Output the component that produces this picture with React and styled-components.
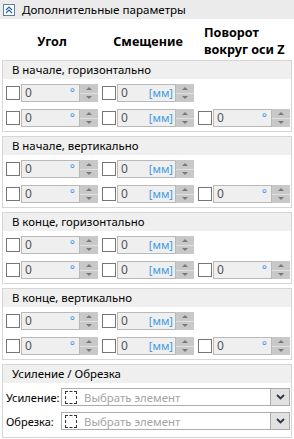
import React from 'react'
import styled, { createGlobalStyle } from 'styled-components'

const GlobalStyle = createGlobalStyle`
  html, body { margin: 0; padding: 0; background: #fff; }
  body {
    font-family: "Noto Sans", "Liberation Sans", sans-serif;
    font-size: 11.4px;
    color: #000;
  }
`

const groups = [
  'В начале, горизонтально',
  'В начале, вертикально',
  'В конце, горизонтально',
  'В конце, вертикально',
]

// one checkbox + spin field + spinner
function SpinCell({ unit }) {
  return (
    <Cell>
      <Check />
      <Field>
        <Value>0</Value>
        {unit === 'mm' ? <Unit>[мм]</Unit> : <Degree>°</Degree>}
      </Field>
      <Spinner>
        <SpinHalf><ArrowUp /></SpinHalf>
        <SpinHalf><ArrowDown /></SpinHalf>
      </Spinner>
    </Cell>
  )
}

function Chevron() {
  return (
    <svg width="9" height="6" viewBox="0 0 9 6">
      <polyline points="1,1 4.5,4.5 8,1" fill="none" stroke="#2a3646" strokeWidth="1.8" />
    </svg>
  )
}

function PickSelect() {
  return (
    <Select>
      <DashedIcon />
      <Placeholder>Выбрать элемент</Placeholder>
      <DropButton><Chevron /></DropButton>
    </Select>
  )
}

export default function App() {
  return (
    <Page>
      <GlobalStyle />
      <Header>
        <CollapseBox>
          <svg width="8" height="8" viewBox="0 0 8 8">
            <polyline points="1,4 4,1 7,4" fill="none" stroke="#2f62a8" strokeWidth="1.2" />
            <polyline points="1,7 4,4 7,7" fill="none" stroke="#2f62a8" strokeWidth="1.2" />
          </svg>
        </CollapseBox>
        <span>Дополнительные параметры</span>
      </Header>

      <ColumnHeads>
        <ColumnHead>Угол</ColumnHead>
        <ColumnHead>Смещение</ColumnHead>
        <ColumnHead $left>
          <HeadLine>Поворот</HeadLine>
          <HeadLine>вокруг оси Z</HeadLine>
        </ColumnHead>
      </ColumnHeads>

      {groups.map((g) => (
        <Group key={g}>
          <GroupTitle>{g}</GroupTitle>
          <GroupBody>
            <Row>
              <SpinCell unit="deg" />
              <SpinCell unit="mm" />
            </Row>
            <Row>
              <SpinCell unit="deg" />
              <SpinCell unit="mm" />
              <SpinCell unit="deg" />
            </Row>
          </GroupBody>
        </Group>
      ))}

      <Group>
        <GroupTitle>Усиление / Обрезка</GroupTitle>
        <SelectBody>
          <SelectRow>
            <SelectLabel>Усиление:</SelectLabel>
            <PickSelect />
          </SelectRow>
          <SelectRow>
            <SelectLabel>Обрезка:</SelectLabel>
            <PickSelect />
          </SelectRow>
        </SelectBody>
      </Group>
    </Page>
  )
}

const Page = styled.div`
  width: 294px;
  height: 439px;
  overflow: hidden;
  background: #fff;
`
const Header = styled.div`
  height: 19px;
  background: #ebebeb;
  display: flex;
  align-items: center;
  padding-left: 3px;
  font-size: 11.6px;
`
const CollapseBox = styled.div`
  width: 10px;
  height: 10px;
  border: 1px solid #5d7ea6;
  background: #fff;
  display: flex;
  align-items: center;
  justify-content: center;
  margin-right: 7px;
`
const ColumnHeads = styled.div`
  display: grid;
  grid-template-columns: repeat(3, 92px);
  column-gap: 4px;
  padding: 3px 0 0 6px;
  height: 41px;
  box-sizing: border-box;
  align-items: center;
`
const ColumnHead = styled.div`
  font-weight: 700;
  font-size: 12.6px;
  line-height: 17px;
  text-align: ${(p) => (p.$left ? 'left' : 'center')};
  padding-left: ${(p) => (p.$left ? '6px' : '0')};
  white-space: nowrap;
`
const HeadLine = styled.div`
  height: 17px;
`
const Group = styled.div`
  margin: 0 2px 4px 2px;
  border: 1px solid #d6d6d6;
`
const GroupTitle = styled.div`
  height: 18px;
  line-height: 18px;
  background: #efefef;
  padding-left: 9px;
`
const GroupBody = styled.div`
  padding: 5px 3px 4px 3px;
  display: flex;
  flex-direction: column;
  gap: 7px;
`
const Row = styled.div`
  display: grid;
  grid-template-columns: repeat(3, 92px);
  column-gap: 4px;
`
const Cell = styled.div`
  display: flex;
  align-items: center;
`
const Check = styled.span`
  width: 12px;
  height: 12px;
  border: 1px solid #767676;
  background: #fff;
  margin-right: 1px;
  flex: none;
`
const Field = styled.div`
  width: 59px;
  height: 18px;
  box-sizing: border-box;
  border: 1px solid #b9b9b9;
  background: #efefef;
  display: flex;
  align-items: center;
  justify-content: space-between;
  padding: 0 2px 0 3px;
`
const Value = styled.span`
  color: #555;
  font-size: 12px;
  line-height: 16px;
`
const Unit = styled.span`
  color: #3f9be4;
  font-size: 11px;
  line-height: 16px;
`
const Degree = styled.span`
  color: #3f9be4;
  font-size: 12px;
  line-height: 16px;
  margin-right: 2px;
`
const Spinner = styled.div`
  width: 18px;
  height: 18px;
  display: flex;
  flex-direction: column;
  background: #c8c8c8;
`
const SpinHalf = styled.div`
  flex: 1;
  display: flex;
  align-items: center;
  justify-content: center;
  & + & {
    border-top: 1px solid #e0e0e0;
  }
`
const ArrowUp = styled.span`
  width: 0;
  height: 0;
  border-left: 3px solid transparent;
  border-right: 3px solid transparent;
  border-bottom: 3px solid #7a7a7a;
`
const ArrowDown = styled.span`
  width: 0;
  height: 0;
  border-left: 3px solid transparent;
  border-right: 3px solid transparent;
  border-top: 3px solid #7a7a7a;
`
const SelectBody = styled.div`
  padding: 5px 1px 7px 3px;
  display: flex;
  flex-direction: column;
  gap: 6px;
`
const SelectRow = styled.div`
  display: flex;
  align-items: center;
`
const SelectLabel = styled.span`
  width: 55px;
  flex: none;
  white-space: nowrap;
  font-size: 11px;
`
const Select = styled.div`
  flex: 1;
  height: 18px;
  box-sizing: border-box;
  border: 1px solid #acacac;
  background: #fff;
  display: flex;
  align-items: center;
`
const DashedIcon = styled.span`
  width: 10px;
  height: 11px;
  border: 1px dashed #333;
  margin-left: 3px;
  flex: none;
`
const Placeholder = styled.span`
  color: #a3a3a3;
  margin-left: 7px;
  flex: 1;
`
const DropButton = styled.div`
  width: 18px;
  height: 100%;
  background: #e1e1e1;
  border-left: 1px solid #acacac;
  display: flex;
  align-items: center;
  justify-content: center;
`
